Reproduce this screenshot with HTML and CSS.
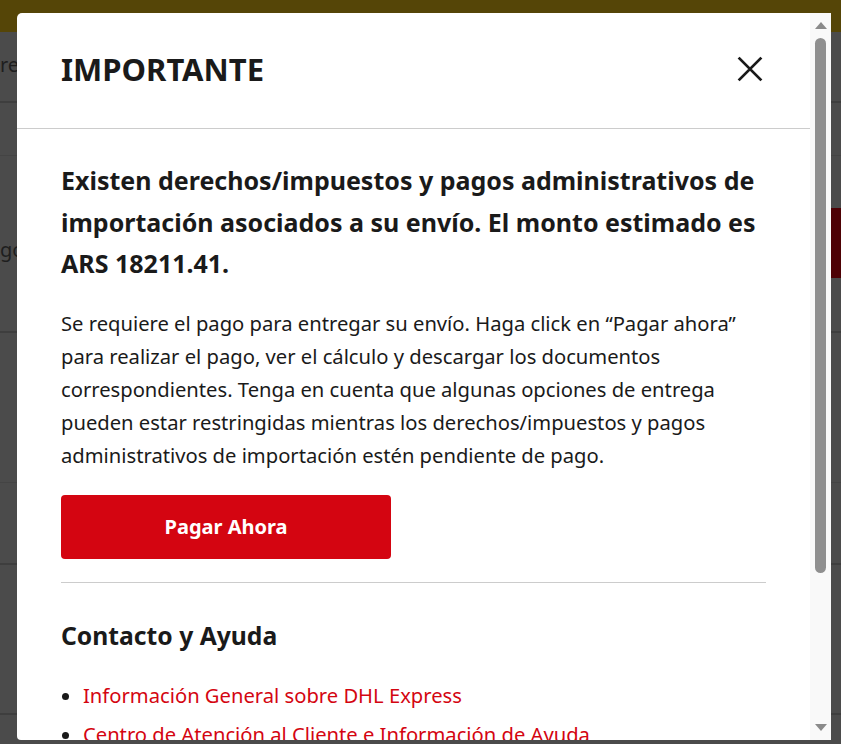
FILE: index.html
```html
<!DOCTYPE html>
<html lang="es">
<head>
<meta charset="utf-8">
<title>Importante</title>
<link rel="stylesheet" href="styles.css">
</head>
<body>
<div class="page">
  <div class="topbar"></div>
  <div class="nav"><span class="nav-text">re</span></div>
  <div class="row row-short"></div>
  <div class="row row-main">
    <span class="row-text">go</span>
    <span class="row-action"></span>
  </div>
  <div class="row row-a"></div>
  <div class="row row-b"></div>
  <div class="row row-c"></div>
</div>

<div class="modal" role="dialog" aria-labelledby="modal-title">
  <div class="modal-main">
    <header class="modal-header">
      <h2 id="modal-title" class="modal-title">IMPORTANTE</h2>
      <button class="close-btn" aria-label="Cerrar">
        <svg viewBox="0 0 24 24" width="26" height="26" aria-hidden="true">
          <path d="M1.5 1.5 L22.5 22.5 M22.5 1.5 L1.5 22.5" stroke="#1a1a1a" stroke-width="2.6" fill="none" stroke-linecap="butt"/>
        </svg>
      </button>
    </header>
    <div class="modal-body">
      <h3 class="lead">Existen derechos/impuestos y pagos administrativos de importación asociados a su envío. El monto estimado es ARS 18211.41.</h3>
      <p class="text">Se requiere el pago para entregar su envío. Haga click en “Pagar ahora” para realizar el pago, ver el cálculo y descargar los documentos correspondientes. Tenga en cuenta que algunas opciones de entrega pueden estar restringidas mientras los derechos/impuestos y pagos administrativos de importación estén pendiente de pago.</p>
      <button class="pay-btn">Pagar Ahora</button>
      <hr class="divider">
      <h3 class="section-title">Contacto y Ayuda</h3>
      <ul class="links">
        <li><a href="#">Información General sobre DHL Express</a></li>
        <li><a href="#">Centro de Atención al Cliente e Información de Ayuda</a></li>
      </ul>
    </div>
  </div>
  <div class="scrollbar" aria-hidden="true">
    <span class="arrow arrow-up"></span>
    <span class="thumb"></span>
    <span class="track-space"></span>
    <span class="arrow arrow-down"></span>
  </div>
</div>
</body>
</html>
```

FILE: styles.css
```css
* { box-sizing: border-box; }

html, body {
  margin: 0;
  padding: 0;
  height: 744px;
  overflow: hidden;
}

body {
  background: #4b4b4b;
  font-family: "Noto Sans", "Liberation Sans", sans-serif;
  color: #1a1a1a;
  position: relative;
}

/* dimmed page behind the dialog */
.page {
  display: flex;
  flex-direction: column;
}

.topbar {
  height: 32px;
  background: #554507;
}

.nav {
  height: 71px;
  border-bottom: 2px solid #3e3e3e;
  display: flex;
  align-items: center;
  padding-bottom: 4px;
  font-size: 20px;
  color: #1e1e1e;
}

.row {
  border-bottom: 1px solid #444444;
}

.row-short { height: 53px; }

.row-main {
  height: 177px;
  display: flex;
  align-items: center;
  justify-content: space-between;
  border-bottom: 2px solid #3e3e3e;
  font-size: 20px;
  color: #1e1e1e;
}

.row-text { padding-top: 12px; }

.row-action {
  width: 120px;
  height: 70px;
  background: #4e0105;
  margin-top: -2px;
}

.row-a { height: 150px; }
.row-b { height: 82px; border-bottom: 2px solid #3e3e3e; }
.row-c { height: 150px; border-bottom: 2px solid #3e3e3e; }

/* dialog */
.modal {
  position: absolute;
  left: 17px;
  top: 13px;
  width: 814px;
  height: 727px;
  background: #ffffff;
  border-radius: 5px 0 0 4px;
  display: flex;
  overflow: hidden;
}

.modal-main {
  flex: 1;
  min-width: 0;
  overflow: hidden;
}

.modal-header {
  height: 116px;
  border-bottom: 1px solid #cccccc;
  display: flex;
  align-items: center;
  justify-content: space-between;
  padding: 0 47px 4px 44px;
}

.modal-title {
  margin: 0;
  font-size: 31px;
  font-weight: 700;
  color: #1a1a1a;
}

.close-btn {
  border: 0;
  background: none;
  padding: 0;
  width: 26px;
  height: 26px;
  display: flex;
  cursor: pointer;
}

.modal-body {
  padding: 31px 44px 0 44px;
}

.lead {
  margin: 0;
  font-size: 25px;
  font-weight: 700;
  line-height: 41.5px;
  color: #1a1a1a;
}

.text {
  margin: 22px 0 0 0;
  font-size: 20.2px;
  line-height: 33px;
  color: #1a1a1a;
}

.pay-btn {
  margin-top: 23px;
  width: 330px;
  height: 64px;
  border: 0;
  border-radius: 4px;
  background: #d40511;
  color: #ffffff;
  font-family: inherit;
  font-size: 20px;
  font-weight: 700;
  cursor: pointer;
}

.divider {
  margin: 23px 0 0 0;
  border: 0;
  border-top: 1px solid #cccccc;
}

.section-title {
  margin: 35px 0 0 0;
  font-size: 24.7px;
  font-weight: 700;
  line-height: 36px;
  color: #1a1a1a;
}

.links {
  margin: 23px 0 0 0;
  padding: 0 0 0 22px;
  font-size: 20.2px;
  line-height: 37px;
}

.links li { margin-bottom: 2px; }

.links a {
  color: #d40511;
  text-decoration: none;
}

/* drawn scrollbar */
.scrollbar {
  width: 21px;
  background: #f9f9f9;
  display: flex;
  flex-direction: column;
  align-items: center;
  padding: 9px 0 9px 0;
}

.arrow {
  width: 0;
  height: 0;
  border-left: 6.5px solid transparent;
  border-right: 6.5px solid transparent;
}

.arrow-up { border-bottom: 7px solid #8a8a8a; }
.arrow-down { border-top: 7px solid #8a8a8a; }

.thumb {
  margin-top: 9px;
  width: 11px;
  height: 535px;
  border-radius: 6px;
  background: #8f8f8f;
}

.track-space { flex: 1; }
```
